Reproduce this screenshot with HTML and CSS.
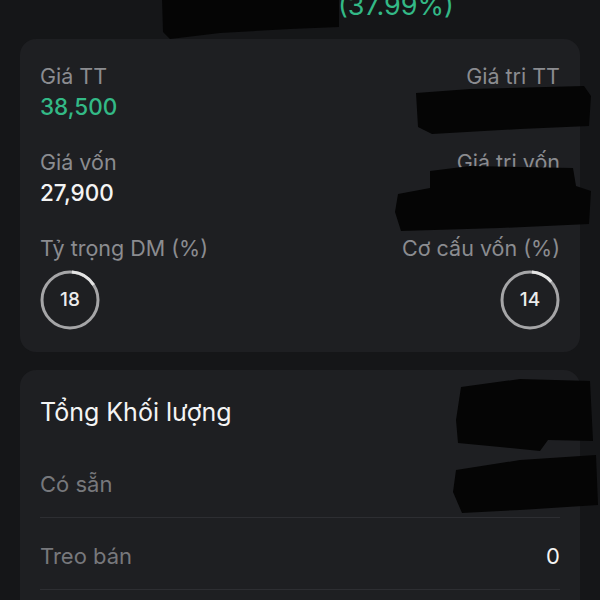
FILE: index.html
```html
<!DOCTYPE html>
<html>
<head>
	<meta charset="utf-8">
	<title>Danh mục</title>
	<link rel="stylesheet" href="styles.css">
</head>
<body>

	<div class="screen">
		<div class="summary">
			<span class="pct">(37.99%)</span>
		</div>

		<div class="card stats">
			<div class="cell">
				<div class="label">Giá TT</div>
				<div class="value green">38,500</div>
			</div>
			<div class="cell right">
				<div class="label">Giá tri TT</div>
				<div class="value">&nbsp;</div>
			</div>
			<div class="cell">
				<div class="label">Giá vốn</div>
				<div class="value">27,900</div>
			</div>
			<div class="cell right">
				<div class="label">Giá tri vốn</div>
				<div class="value">&nbsp;</div>
			</div>
			<div class="cell">
				<div class="label">Tỷ trọng DM (%)</div>
				<div class="ring">
					<svg width="60" height="60" viewBox="0 0 60 60">
						<circle cx="30" cy="30" r="28" fill="none" stroke="#a5a5a7" stroke-width="3"/>
						<circle cx="30" cy="30" r="28" fill="none" stroke="#e4e4e4" stroke-width="3"
							stroke-dasharray="26 176" transform="rotate(-86 30 30)"/>
					</svg>
					<span>18</span>
				</div>
			</div>
			<div class="cell right">
				<div class="label">Cơ cấu vốn (%)</div>
				<div class="ring">
					<svg width="60" height="60" viewBox="0 0 60 60">
						<circle cx="30" cy="30" r="28" fill="none" stroke="#a5a5a7" stroke-width="3"/>
						<circle cx="30" cy="30" r="28" fill="none" stroke="#e4e4e4" stroke-width="3"
							stroke-dasharray="22 176" transform="rotate(-86 30 30)"/>
					</svg>
					<span>14</span>
				</div>
			</div>
		</div>

		<div class="card volume">
			<div class="title">Tổng Khối lượng</div>
			<div class="row">
				<span class="row-label">Có sẵn</span>
				<span class="row-value"></span>
			</div>
			<div class="row">
				<span class="row-label">Treo bán</span>
				<span class="row-value">0</span>
			</div>
		</div>
	</div>

	<!-- vùng bị che -->
	<svg class="masks" width="600" height="600" viewBox="0 0 600 600">
		<polygon points="162,-2 339,-2 339,27 290,29 220,33 170,39 163,32"/>
		<polygon points="416,93 470,89 584,86 591,96 589,126 520,129 432,134 418,127"/>
		<polygon points="430,171 470,166 573,168 576,186 591,191 589,224 500,228 401,231 395,212 398,194 430,188"/>
		<polygon points="461,387 520,379 590,381 593,441 548,440 540,451 500,447 458,443 456,420"/>
		<polygon points="456,470 520,460 596,455 598,505 520,510 462,513 453,492"/>
	</svg>

</body>
</html>
```

FILE: styles.css
```css
* {
	padding: 0;
	margin: 0;
	box-sizing: border-box;
}
body {
	position: relative;
	width: 600px;
	height: 600px;
	overflow: hidden;
	background-color: #151618;
	font-family: Inter, "Noto Sans", sans-serif;
	color: #f0f0f0;
}
.screen {
	padding: 0 20px;
}

/* dòng lãi lỗ trên cùng */
.summary {
	display: flex;
	height: 30px;
	margin-top: -9px;
	padding-left: 318px;
}
.pct {
	font-size: 27px;
	line-height: 30px;
	color: #33b986;
	white-space: nowrap;
}

.card {
	background-color: #1e1f22;
	border-radius: 16px;
}

.stats {
	display: grid;
	grid-template-columns: 1fr 1fr;
	row-gap: 28px;
	margin-top: 18px;
	padding: 24px 20px 22px;
}
.cell {
	display: flex;
	flex-direction: column;
	align-items: flex-start;
}
.cell.right {
	align-items: flex-end;
}
.label {
	font-size: 21.5px;
	line-height: 26px;
	color: #8b8c90;
}
.value {
	margin-top: 4px;
	font-size: 22.5px;
	line-height: 28px;
	font-weight: 500;
	color: #f4f4f4;
}
.value.green {
	color: #33b986;
}

.ring {
	position: relative;
	width: 60px;
	height: 60px;
	margin-top: 9px;
}
.ring svg {
	display: block;
}
.ring span {
	position: absolute;
	top: 0;
	left: 0;
	width: 60px;
	line-height: 60px;
	text-align: center;
	font-size: 19px;
	font-weight: 500;
	color: #ececec;
}

.volume {
	margin-top: 18px;
	padding: 27px 20px 0;
	height: 260px;
}
.title {
	font-size: 25px;
	line-height: 30px;
	color: #f4f4f4;
	margin-bottom: 19px;
}
.row {
	display: flex;
	justify-content: space-between;
	padding: 24px 0 19px;
	border-bottom: 1px solid #2d2e32;
	font-size: 22px;
	line-height: 28px;
}
.row-label {
	color: #77787c;
}
.row-value {
	color: #f4f4f4;
}

.masks {
	position: absolute;
	top: 0;
	left: 0;
	fill: #050505;
}
```
